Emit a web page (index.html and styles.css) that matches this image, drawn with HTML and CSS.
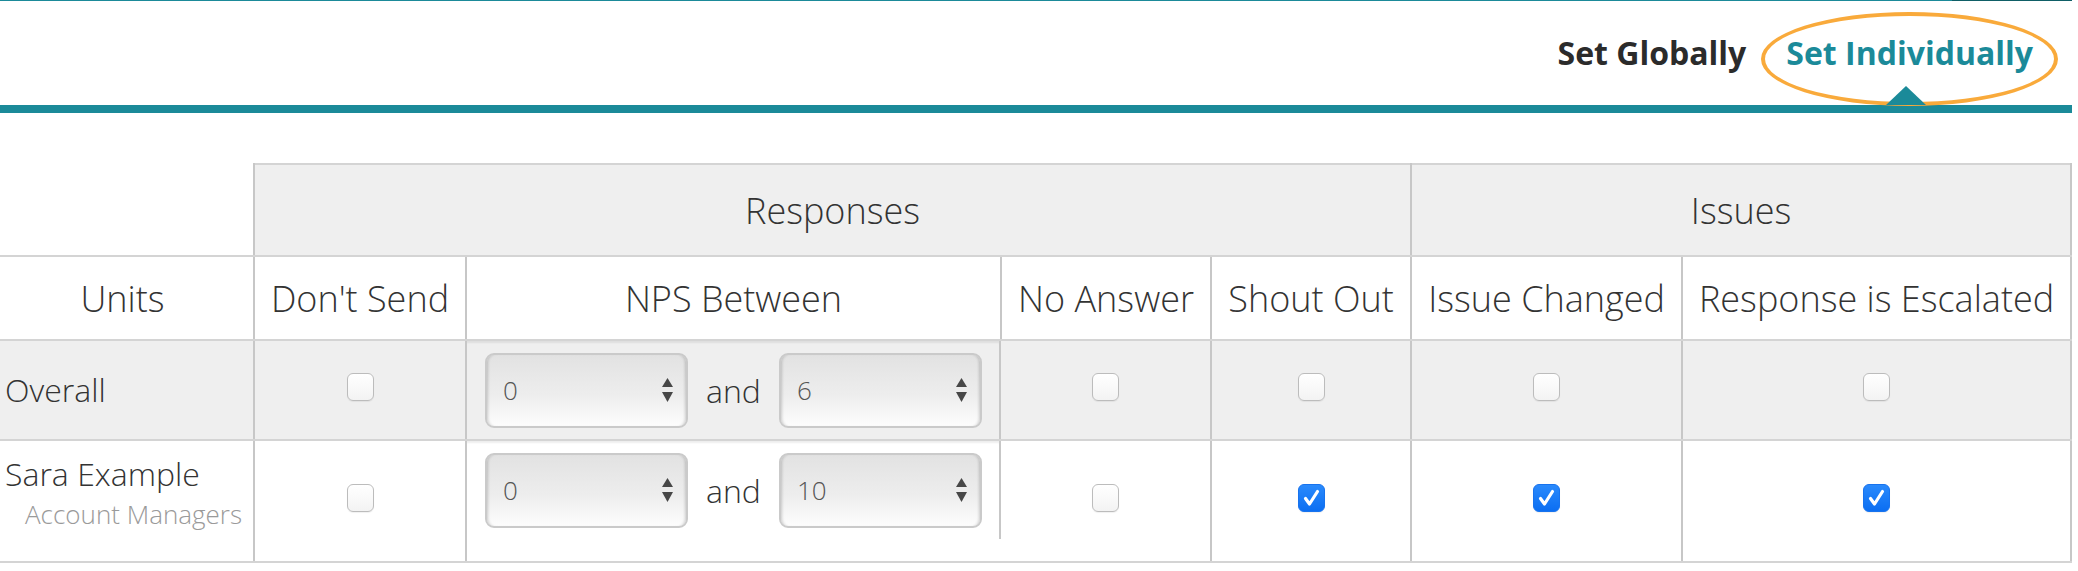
FILE: index.html
```html
<!DOCTYPE html>
<html lang="en">
<head>
<meta charset="utf-8">
<title>Notification settings</title>
<link rel="stylesheet" href="styles.css">
</head>
<body>
<div class="page">
  <div class="topline"><span class="topline-main"></span><span class="topline-end"></span></div>
  <nav class="tabs">
    <a class="tab">Set Globally</a>
    <a class="tab tab-active">Set Individually</a>
  </nav>
  <div class="tabbar"></div>

  <table class="grid">
    <colgroup>
      <col class="c-units"><col class="c-dont"><col class="c-nps"><col class="c-noans"><col class="c-shout"><col class="c-issue"><col class="c-esc">
    </colgroup>
    <thead>
      <tr class="group-row">
        <th class="blank"></th>
        <th colspan="4">Responses</th>
        <th colspan="2">Issues</th>
      </tr>
      <tr class="col-row">
        <th class="units-h">Units</th>
        <th>Don't Send</th>
        <th>NPS Between</th>
        <th>No Answer</th>
        <th>Shout Out</th>
        <th>Issue Changed</th>
        <th>Response is Escalated</th>
      </tr>
    </thead>
    <tbody>
      <tr class="row-alt">
        <td class="unit"><div class="unit-name">Overall</div></td>
        <td><span class="cb"></span></td>
        <td class="nps">
          <div class="nps-box">
            <div class="select"><span>0</span><svg class="arrows" width="11" height="24" viewBox="0 0 11 24"><polygon points="5.5,0 11,9 0,9"/><polygon points="0,14 11,14 5.5,24"/></svg></div>
            <span class="and">and</span>
            <div class="select"><span>6</span><svg class="arrows" width="11" height="24" viewBox="0 0 11 24"><polygon points="5.5,0 11,9 0,9"/><polygon points="0,14 11,14 5.5,24"/></svg></div>
          </div>
        </td>
        <td class="after-nps"><span class="cb"></span></td>
        <td><span class="cb"></span></td>
        <td><span class="cb"></span></td>
        <td><span class="cb"></span></td>
      </tr>
      <tr class="row-main">
        <td class="unit unit-two">
          <div class="unit-name">Sara Example</div>
          <div class="unit-sub">Account Managers</div>
        </td>
        <td><span class="cb"></span></td>
        <td class="nps">
          <div class="nps-box">
            <div class="select"><span>0</span><svg class="arrows" width="11" height="24" viewBox="0 0 11 24"><polygon points="5.5,0 11,9 0,9"/><polygon points="0,14 11,14 5.5,24"/></svg></div>
            <span class="and">and</span>
            <div class="select"><span>10</span><svg class="arrows" width="11" height="24" viewBox="0 0 11 24"><polygon points="5.5,0 11,9 0,9"/><polygon points="0,14 11,14 5.5,24"/></svg></div>
          </div>
        </td>
        <td class="after-nps"><span class="cb"></span></td>
        <td><span class="cb cb-on"><svg width="25" height="26" viewBox="0 0 25 26"><path d="M6.5 13.5 L10.5 19 L18.5 6.5"/></svg></span></td>
        <td><span class="cb cb-on"><svg width="25" height="26" viewBox="0 0 25 26"><path d="M6.5 13.5 L10.5 19 L18.5 6.5"/></svg></span></td>
        <td><span class="cb cb-on"><svg width="25" height="26" viewBox="0 0 25 26"><path d="M6.5 13.5 L10.5 19 L18.5 6.5"/></svg></span></td>
      </tr>
    </tbody>
  </table>
</div>
</body>
</html>
```

FILE: styles.css
```css
* { box-sizing: border-box; }

html, body {
  margin: 0;
  background: #fff;
}

body {
  font-family: "Open Sans", "Liberation Sans", sans-serif;
  color: #333;
}

.page {
  width: 2078px;
  padding-right: 6px;
}

/* top hairline */
.topline {
  display: flex;
  height: 1px;
}
.topline-main { flex: 1; background: #1b8a99; }
.topline-end { width: 120px; background: #0f5e66; }

/* tabs */
.tabs {
  height: 104px;
  display: flex;
  justify-content: flex-end;
  align-items: flex-start;
  gap: 40px;
  padding: 32px 39px 0 0;
}

.tab {
  font-size: 32px;
  font-weight: 700;
  line-height: 40px;
  color: #2b2b2b;
  text-decoration: none;
  white-space: nowrap;
}

.tab-active {
  color: #1b8a99;
  position: relative;
}

.tab-active::before {
  content: "";
  position: absolute;
  left: -25px;
  right: -25px;
  top: -21px;
  height: 86px;
  border: 4px solid #f9aa3b;
  border-radius: 50%;
}

.tab-active::after {
  content: "";
  position: absolute;
  left: 50%;
  margin-left: -24px;
  top: 53px;
  width: 0;
  height: 0;
  border-left: 20px solid transparent;
  border-right: 20px solid transparent;
  border-bottom: 19px solid #1b8a99;
}

.tabbar {
  height: 8px;
  background: #1b8a99;
}

/* table */
.grid {
  margin-top: 50px;
  border-collapse: collapse;
  table-layout: fixed;
  width: 2071px;
}

.c-units { width: 254px; }
.c-dont { width: 212px; }
.c-nps { width: 535px; }
.c-noans { width: 210px; }
.c-shout { width: 200px; }
.c-issue { width: 271px; }
.c-esc { width: 389px; }

.grid th,
.grid td {
  border: 2px solid #d4d4d4;
  border-left-color: #c7c7c7;
  border-right-color: #c7c7c7;
  padding: 0;
}

.grid th {
  font-weight: 300;
  font-size: 36px;
  color: #333;
  text-align: center;
  vertical-align: middle;
  white-space: nowrap;
}

.group-row th {
  height: 92px;
  background: #efefef;
}

.group-row th.blank {
  background: #fff;
  border-top: none;
  border-left: none;
}

.col-row th {
  height: 84px;
  background: #fff;
}

.col-row th.units-h {
  border-left: none;
  padding-right: 8px;
}

.grid td {
  text-align: center;
  vertical-align: middle;
}

.row-alt td {
  height: 100px;
  background: #efefef;
}

.row-main td {
  height: 122px;
  background: #fff;
}

.grid td.unit {
  text-align: left;
  padding-left: 5px;
  border-left: none;
}

.grid td.unit-two {
  padding-bottom: 14px;
}

.unit-name {
  font-size: 32px;
  font-weight: 300;
  line-height: 40px;
}

.unit-sub {
  font-size: 26px;
  font-weight: 300;
  color: #9a9a9a;
  line-height: 40px;
  padding-left: 20px;
}

.grid td.nps {
  vertical-align: top;
  border-right: none;
}

.grid td.after-nps {
  border-left: none;
}

.nps-box {
  height: 98px;
  display: flex;
  align-items: center;
  gap: 18px;
  padding-left: 18px;
  border-right: 2px solid #c7c7c7;
  box-shadow: inset 0 3px 2px -1px rgba(0, 0, 0, 0.07);
}

.select {
  width: 203px;
  height: 75px;
  display: flex;
  align-items: center;
  justify-content: space-between;
  padding: 0 13px 0 16px;
  border: 2px solid #cacaca;
  border-radius: 9px;
  background: linear-gradient(#e2e2e2, #ededed 55%, #fdfdfd);
  box-shadow: inset 3px 0 3px -2px rgba(0, 0, 0, 0.18), inset -3px 0 3px -2px rgba(0, 0, 0, 0.18);
  font-size: 26px;
  font-weight: 300;
  color: #555;
}

.arrows { fill: #474747; }

.and {
  font-size: 32px;
  font-weight: 300;
}

.cb {
  display: inline-block;
  width: 27px;
  height: 28px;
  margin-bottom: 6px;
  border: 1px solid #bcbcbc;
  border-radius: 6px;
  background: linear-gradient(#ffffff, #f3f3f3);
  box-shadow: 0 1px 1px rgba(0, 0, 0, 0.06);
  vertical-align: middle;
}

.cb-on {
  border-color: #1873ee;
  background: linear-gradient(#2a8afc, #0b6ef2);
}

.cb-on svg {
  display: block;
}

.cb-on path {
  fill: none;
  stroke: #fff;
  stroke-width: 3.2;
  stroke-linecap: round;
  stroke-linejoin: round;
}
```
